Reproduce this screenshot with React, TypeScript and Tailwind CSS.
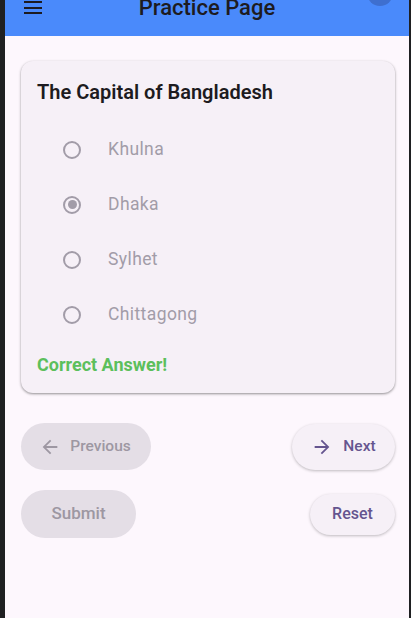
const options = ["Khulna", "Dhaka", "Sylhet", "Chittagong"];

function Radio({ checked }: { checked: boolean }) {
  return (
    <span className="flex h-[18px] w-[18px] items-center justify-center rounded-full border-2 border-[#a29ca8]">
      {checked && <span className="h-[9px] w-[9px] rounded-full bg-[#a29ca8]" />}
    </span>
  );
}

function ArrowBack() {
  return (
    <svg width="22" height="22" viewBox="0 0 24 24" fill="currentColor">
      <path d="M20 11H7.83l5.59-5.59L12 4l-8 8 8 8 1.41-1.41L7.83 13H20v-2z" />
    </svg>
  );
}

function ArrowForward() {
  return (
    <svg width="22" height="22" viewBox="0 0 24 24" fill="currentColor">
      <path d="M12 4l-1.41 1.41L16.17 11H4v2h12.17l-5.58 5.59L12 20l8-8z" />
    </svg>
  );
}

export default function App() {
  return (
    <div className="flex h-[618px] w-[411px] overflow-hidden bg-[#1f2022] font-['Roboto',sans-serif]">
      <div className="w-[5px] shrink-0" />
      <div className="flex flex-1 flex-col bg-[#fdf7fd]">
        <header className="relative flex h-[36px] shrink-0 items-start overflow-hidden bg-[#4a8afb]">
          <div className="ml-[19px] mt-[1px] flex flex-col gap-[3.5px]">
            <span className="h-[2px] w-[18px] bg-[#1d1b20]" />
            <span className="h-[2px] w-[18px] bg-[#1d1b20]" />
            <span className="h-[2px] w-[18px] bg-[#1d1b20]" />
          </div>
          <h1 className="absolute left-0 right-0 top-[-6px] text-center text-[22px] font-medium leading-[28px] text-[#1d1b20]">
            Practice Page
          </h1>
          <span className="absolute right-[16px] top-[-20px] h-[26px] w-[26px] rounded-full bg-[#3e6fcf]" />
        </header>

        <main className="flex flex-1 flex-col pl-[16px] pr-[14px] pt-[25px]">
          <section className="rounded-[12px] bg-[#f6f0f7] px-[16px] pb-[17px] pt-[19px] shadow-[0_1px_3px_rgba(0,0,0,0.3),0_1px_2px_rgba(0,0,0,0.15)]">
            <h2 className="text-[20px] font-semibold leading-[24px] text-[#1d1b20]">
              The Capital of Bangladesh
            </h2>
            <ul className="mt-[18px] flex flex-col">
              {options.map((o) => (
                <li key={o} className="flex h-[55px] items-center pl-[26px]">
                  <Radio checked={o === "Dhaka"} />
                  <span className="ml-[27px] text-[17.5px] tracking-[0.4px] text-[#a29ca8]">{o}</span>
                </li>
              ))}
            </ul>
            <p className="mt-[12px] text-[18px] font-bold leading-[22px] text-[#5cbf5c]">
              Correct Answer!
            </p>
          </section>

          <div className="mt-[30px] flex items-center justify-between">
            <button className="flex h-[47px] w-[130px] items-center justify-center gap-[9px] rounded-full bg-[#e4dee6] pr-[2px] text-[15.5px] font-medium text-[#9d97a2]">
              <ArrowBack />
              Previous
            </button>
            <button className="flex h-[46px] w-[103px] items-center justify-center gap-[10px] rounded-full bg-[#f6f0f7] text-[15.5px] font-medium text-[#65558f] shadow-[0_1px_3px_rgba(0,0,0,0.25)]">
              <ArrowForward />
              Next
            </button>
          </div>

          <div className="mt-[20px] flex items-center justify-between">
            <button className="flex h-[48px] w-[115px] items-center justify-center rounded-full bg-[#e4dee6] text-[17px] font-medium text-[#9d97a2]">
              Submit
            </button>
            <button className="flex h-[41px] w-[85px] items-center justify-center rounded-full bg-[#f6f0f7] text-[16px] font-medium text-[#65558f] shadow-[0_1px_3px_rgba(0,0,0,0.25)]">
              Reset
            </button>
          </div>
        </main>
      </div>
      <div className="w-[2px] shrink-0" />
    </div>
  );
}
